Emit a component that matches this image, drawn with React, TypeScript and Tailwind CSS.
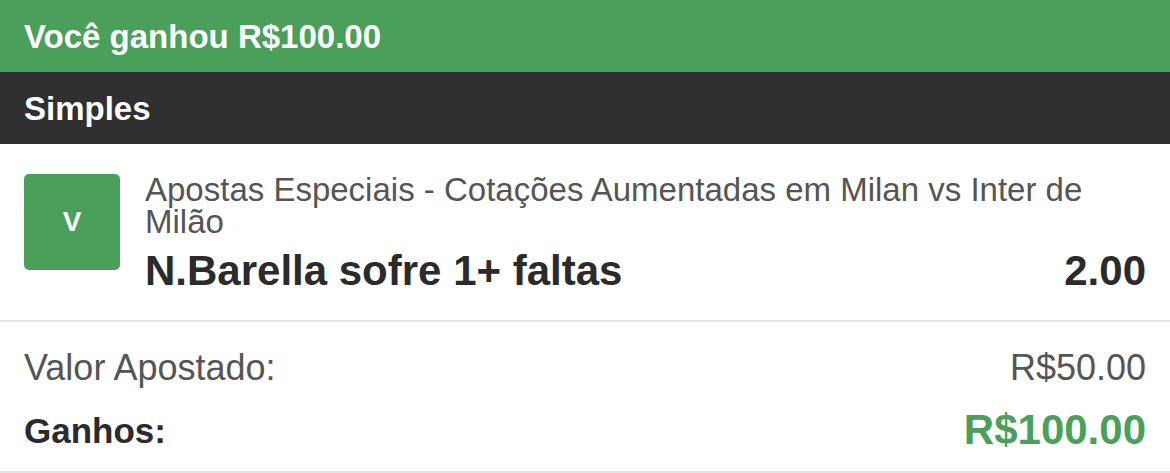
import React from "react";

export default function App() {
  return (
    <div className="w-[1170px] h-[473px] bg-white overflow-hidden" style={{ fontFamily: '"Liberation Sans", Arial, sans-serif' }}>
      <div className="h-[72px] bg-[#4a9f5b] flex items-center px-[24px]">
        <span className="text-white font-bold text-[33px] leading-none">Você ganhou R$100.00</span>
      </div>
      <div className="h-[72px] bg-[#303030] flex items-center px-[24px]">
        <span className="text-white font-bold text-[33px] leading-none">Simples</span>
      </div>
      <div className="h-[178px] flex items-start gap-[25px] px-[24px] pt-[30px] border-b-[2px] border-[#e3e3e6]">
        <div className="w-[96px] h-[96px] shrink-0 rounded-[5px] bg-[#4a9f5b] flex items-center justify-center">
          <span className="text-white font-bold text-[28px] leading-none">V</span>
        </div>
        <div className="flex-1 flex flex-col">
          <div className="text-[33px] leading-[32px] text-[#555555] pr-[40px]">
            Apostas Especiais - Cotações Aumentadas em Milan vs Inter de Milão
          </div>
          <div className="flex items-center justify-between mt-[9px]">
            <span className="text-[42px] leading-[48px] font-bold text-[#2b2b2b]">N.Barella sofre 1+ faltas</span>
            <span className="text-[42px] leading-[48px] font-bold text-[#2b2b2b]">2.00</span>
          </div>
        </div>
      </div>
      <div className="h-[151px] px-[24px] border-b-[2px] border-[#e3e3e6] flex flex-col pt-[26px]">
        <div className="flex items-center justify-between h-[40px]">
          <span className="text-[36px] text-[#555555] leading-none">Valor Apostado:</span>
          <span className="text-[36px] text-[#555555] leading-none">R$50.00</span>
        </div>
        <div className="flex items-center justify-between h-[40px] mt-[22px]">
          <span className="text-[35px] font-bold text-[#2b2b2b] leading-none">Ganhos:</span>
          <span className="text-[42px] font-bold text-[#4a9f5b] leading-none">R$100.00</span>
        </div>
      </div>
    </div>
  );
}
